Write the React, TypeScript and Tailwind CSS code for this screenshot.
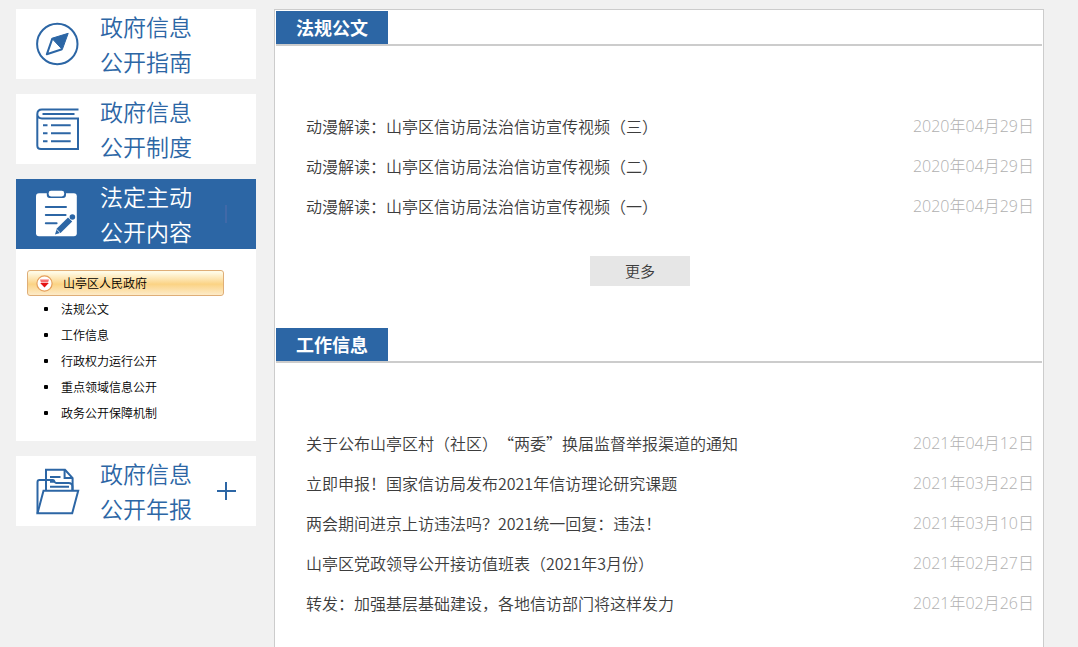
import type { ReactNode } from "react";

type Article = {
  title: string;
  date: string;
};

const REGULATIONS: Article[] = [
  { title: "动漫解读：山亭区信访局法治信访宣传视频（三）", date: "2020年04月29日" },
  { title: "动漫解读：山亭区信访局法治信访宣传视频（二）", date: "2020年04月29日" },
  { title: "动漫解读：山亭区信访局法治信访宣传视频（一）", date: "2020年04月29日" },
];

const WORK_INFO: Article[] = [
  { title: "关于公布山亭区村（社区）“两委”换届监督举报渠道的通知", date: "2021年04月12日" },
  { title: "立即申报！国家信访局发布2021年信访理论研究课题", date: "2021年03月22日" },
  { title: "两会期间进京上访违法吗？2021统一回复：违法！", date: "2021年03月10日" },
  { title: "山亭区党政领导公开接访值班表（2021年3月份）", date: "2021年02月27日" },
  { title: "转发：加强基层基础建设，各地信访部门将这样发力", date: "2021年02月26日" },
];

const SUB_ITEMS = ["法规公文", "工作信息", "行政权力运行公开", "重点领域信息公开", "政务公开保障机制"];

function CompassIcon() {
  return (
    <svg width="44" height="48" viewBox="0 0 44 48" fill="none" stroke="currentColor" strokeWidth="2">
      <circle cx="21.3" cy="24" r="20.2" />
      <path d="M16.3 18.7 L10.8 34.3 L26 29.3" strokeLinejoin="round" />
      <path d="M32.2 13.3 L15.8 18.3 L26.3 29.5 Z" fill="currentColor" strokeWidth="1" />
    </svg>
  );
}

function BookIcon() {
  return (
    <svg width="44" height="48" viewBox="0 0 44 48" fill="none" stroke="currentColor" strokeWidth="2">
      <path d="M42.5 4.5 H6 C2.8 4.5 1.3 6.7 1.3 9.2 V40.5 C1.3 42.8 2.8 44 5 44 H42 V13.5 H6 C3 13.5 1.3 11.7 1.3 9.2" />
      <path d="M6.5 9 H38.5" strokeWidth="1.8" />
      <path d="M7 20.3 H11.5 M7 28.3 H11.5 M7 36.3 H11.5 M15 20.3 H34.7 M15 28.3 H34.7 M15 36.3 H34.7" />
    </svg>
  );
}

function ClipboardIcon() {
  return (
    <svg width="44" height="48" viewBox="0 0 44 48" fill="none">
      <rect x="0" y="3.3" width="40.8" height="43" rx="3" fill="currentColor" />
      <path d="M10.8 2 V5 C10.8 7 12 8 13.5 8 H27.2 C28.8 8 30 7 30 5 V2 Z" fill="#2c66a5" />
      <rect x="12.6" y="0.8" width="15.6" height="5.6" rx="2.4" fill="currentColor" />
      <path d="M9.8 17 H30 M9.8 25 H29.6 M9.8 33.3 H20.6" stroke="#2c66a5" strokeWidth="2" strokeLinecap="round" />
      <path d="M32 27.4 L36.2 31.6 L24.8 42.8 L19 44.6 L20.8 38.6 Z" fill="#2c66a5" />
      <path d="M20.6 39.3 L24 42.7" stroke="white" strokeWidth="0.8" />
      <circle cx="36.4" cy="27" r="2.8" fill="#2c66a5" />
    </svg>
  );
}

function FolderIcon() {
  return (
    <svg width="44" height="48" viewBox="0 0 44 48" fill="none" stroke="currentColor" strokeWidth="2">
      <path d="M10 23.5 V2.8 H29 L36.6 11.2 V23.5" />
      <path d="M28.6 3 V11 H36.6" />
      <path d="M14 10 H24.5 M14 14.7 H19 M14 19.7 H33" />
      <path d="M1.5 46.3 V15 C1.5 13.6 2.2 13 3.5 13 H17 C18.8 13 18.2 16 20 16 H32.5 C35 16 36.4 17.2 36.4 19.5 V23.5" />
      <path d="M7.5 23.8 H42.2 L36.2 46.3 H1.5 Z" />
    </svg>
  );
}

function PlusIcon() {
  return (
    <svg width="20" height="20" viewBox="0 0 20 20" fill="none" stroke="currentColor" strokeWidth="2">
      <path d="M1 10 H20 M10 1 V19" />
    </svg>
  );
}

function ArrowBadge() {
  return (
    <svg width="17" height="17" viewBox="0 0 17 17">
      <circle cx="8.5" cy="8.5" r="7.6" fill="white" stroke="#e5a05c" strokeWidth="1.2" />
      <path d="M4 4.5 H13 L12 7.5 H5 Z" fill="#f77070" />
      <path d="M4.2 8 H12.8 L8.5 12.5 Z" fill="#e31313" />
    </svg>
  );
}

function SideCard({
  lines,
  icon,
  extra,
  active = false,
}: {
  lines: [string, string];
  icon: ReactNode;
  extra?: ReactNode;
  active?: boolean;
}) {
  return (
    <a
      href="#"
      className={`flex items-center px-5 text-[23px] leading-[35px] ${
        active ? "bg-[#2c66a5] text-white" : "bg-white text-[#2c66a5]"
      }`}
    >
      {icon}
      <span className="ml-5 flex-1">
        {lines[0]}
        <br />
        {lines[1]}
      </span>
      {extra}
    </a>
  );
}

function Section({ title, items, children }: { title: string; items: Article[]; children?: ReactNode }) {
  return (
    <section>
      <div className="flex border-b-2 border-[#cccccc]">
        <h2 className="bg-[#2c66a5] px-5 text-lg leading-[33px] font-bold text-white">{title}</h2>
      </div>
      <ul className="mt-[60px] pr-2 pl-[30px]">
        {items.map((item) => (
          <li key={item.title} className="flex justify-between text-base leading-10">
            <a href="#" className="text-[#3c3c3c] [text-spacing-trim:space-all]">
              {item.title}
            </a>
            <span className="font-['Open_Sans','Noto_Sans_CJK_SC',sans-serif] font-light text-[#b0b0b0]">
              {item.date}
            </span>
          </li>
        ))}
      </ul>
      {children}
    </section>
  );
}

export default function App() {
  return (
    <div
      lang="zh-CN"
      className="flex min-h-screen items-stretch bg-[#f1f1f1] pt-[9px] pr-[34px] pl-4 font-['Noto_Sans_CJK_SC',sans-serif] font-[350]"
    >
      <aside className="flex w-60 shrink-0 flex-col gap-[15px]">
        <SideCard lines={["政府信息", "公开指南"]} icon={<CompassIcon />} />
        <SideCard lines={["政府信息", "公开制度"]} icon={<BookIcon />} />

        <div className="bg-white">
          <SideCard
            active
            lines={["法定主动", "公开内容"]}
            icon={<ClipboardIcon />}
            extra={<span className="mr-[9px] h-[18px] w-0.5 bg-[#4069a8]" />}
          />
          <div className="pt-[21px] pr-8 pb-[15px] pl-[11px] text-xs text-black">
            <button
              type="button"
              className="flex h-[26px] w-full items-center gap-2.5 rounded-[3px] border border-[#dfae77] bg-linear-to-b from-[#fffbe6] from-5% via-[#fbd384] via-55% to-[#fdebc8] pl-2 text-left"
            >
              <ArrowBadge />
              山亭区人民政府
            </button>
            <ul>
              {SUB_ITEMS.map((label) => (
                <li key={label} className="flex items-center gap-[13px] pl-[17px] leading-[26px]">
                  <span className="size-1 rounded-[1px] bg-black" />
                  <a href="#">{label}</a>
                </li>
              ))}
            </ul>
          </div>
        </div>

        <SideCard lines={["政府信息", "公开年报"]} icon={<FolderIcon />} extra={<PlusIcon />} />
      </aside>

      <main className="ml-[18px] flex-1 border border-b-0 border-[#cccccc] bg-white p-px">
        <Section title="法规公文" items={REGULATIONS}>
          <div className="mt-[30px] mb-[42px] flex justify-center pr-[38px]">
            <button type="button" className="h-[30px] w-[100px] bg-[#e6e6e6] text-[15px] text-[#3c3c3c]">
              更多
            </button>
          </div>
        </Section>
        <Section title="工作信息" items={WORK_INFO} />
      </main>
    </div>
  );
}
